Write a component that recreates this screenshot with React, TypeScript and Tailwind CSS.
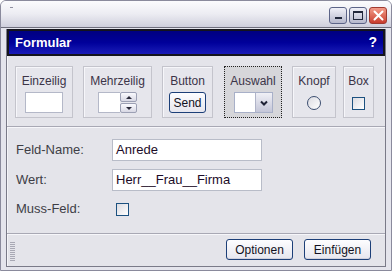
import React from "react";

const F = { fontFamily: '"Liberation Sans", Arial, sans-serif' };

function XPButton({ label, w }: { label: string; w: string }) {
  return (
    <div
      className={`${w} h-[21px] flex items-center justify-center rounded-[3px] border border-[#1c3f78] bg-gradient-to-b from-[#fdfdff] to-[#e6e6ee] text-[12px] text-[#111122] shadow-[inset_0_-1px_0_#d0d0dc]`}
    >
      {label}
    </div>
  );
}

function ToolBox({
  label,
  w,
  children,
  active,
}: {
  label: string;
  w: string;
  children: React.ReactNode;
  active?: boolean;
}) {
  return (
    <div
      className={`${w} h-[52px] flex flex-col items-center pt-[7px] ${
        active
          ? "border border-dotted border-[#222] bg-[#d6d6da]"
          : "border border-[#c4c4cc] bg-[#e6e6ec] shadow-[inset_1px_1px_0_#f6f6fa]"
      }`}
    >
      <div className="text-[12px] leading-[14px] text-[#3b3448] h-[18px]">{label}</div>
      <div className="flex-1 flex items-start justify-center">{children}</div>
    </div>
  );
}

export default function App() {
  return (
    <div style={F} className="w-[392px] h-[271px] overflow-hidden bg-white">
      <div className="w-[392px] h-[271px] flex flex-col rounded-t-[6px] border border-[#8a8a9c] bg-[#e4e4ec]">
        {/* title bar */}
        <div className="h-[27px] flex items-start relative bg-gradient-to-b from-[#fbfbfd] via-[#ececf2] to-[#cfcfdc] rounded-t-[5px] border-b border-[#6e6e7c]">
          <div className="absolute left-[9px] top-[6px] w-[3px] h-[1px] bg-[#9090a0]" />
          <div className="ml-auto mr-[4px] mt-[6px] flex gap-[2px]">
            <div className="w-[18px] h-[17px] rounded-[3px] border border-[#5c6488] bg-gradient-to-b from-[#f0f0f8] to-[#b6b8cc] flex items-end justify-center pb-[4px]">
              <div className="w-[7px] h-[2px] bg-[#22283c]" />
            </div>
            <div className="w-[18px] h-[17px] rounded-[3px] border border-[#5c6488] bg-gradient-to-b from-[#f0f0f8] to-[#b6b8cc] flex items-center justify-center">
              <div className="w-[10px] h-[9px] border border-[#22283c] border-t-2" />
            </div>
            <div className="w-[18px] h-[17px] rounded-[3px] border border-[#a03a30] bg-gradient-to-b from-[#f29a88] to-[#c83a2c] flex items-center justify-center">
              <svg width="11" height="11" viewBox="0 0 11 11">
                <path d="M1.5 1.5 L9.5 9.5 M9.5 1.5 L1.5 9.5" stroke="#fff" strokeWidth="2" strokeLinecap="round" />
              </svg>
            </div>
          </div>
        </div>

        {/* body */}
        <div className="flex-1 px-[5px] pb-[3px] pt-[1px] flex">
          <div className="flex-1 flex flex-col border border-[#7a7a88] border-t-0 bg-[#e4e4ea] shadow-[inset_1px_0_0_#f4f4f8]">
            {/* header */}
            <div className="h-[27px] flex items-center px-[6px] border-2 border-[#14141c] bg-gradient-to-b from-[#000080] via-[#00009a] to-[#1a1ab8]">
              <span className="text-[13px] font-bold text-white">Formular</span>
              <span className="ml-auto text-[14px] font-bold text-white">?</span>
            </div>

            {/* toolbar */}
            <div className="h-[71px] flex items-start pl-[8px] pt-[10px] border-b border-[#a8a8b4]">
              <ToolBox label="Einzeilig" w="w-[58px]">
                <div className="w-[38px] h-[21px] bg-white border border-[#b4b8c8]" />
              </ToolBox>
              <div className="w-[10px]" />
              <ToolBox label="Mehrzeilig" w="w-[69px]">
                <div className="flex">
                  <div className="w-[22px] h-[21px] bg-white border border-[#b4b8c8] border-r-0" />
                  <div className="w-[17px] h-[21px] flex flex-col gap-[1px]">
                    <div className="flex-1 rounded-[2px] border border-[#9ca0b4] bg-gradient-to-b from-[#fafafe] to-[#d8d8e4] flex items-center justify-center">
                      <div className="w-0 h-0 border-l-[3px] border-r-[3px] border-b-[3px] border-l-transparent border-r-transparent border-b-[#2a2a3a]" />
                    </div>
                    <div className="flex-1 rounded-[2px] border border-[#9ca0b4] bg-gradient-to-b from-[#fafafe] to-[#d8d8e4] flex items-center justify-center">
                      <div className="w-0 h-0 border-l-[3px] border-r-[3px] border-t-[3px] border-l-transparent border-r-transparent border-t-[#2a2a3a]" />
                    </div>
                  </div>
                </div>
              </ToolBox>
              <div className="w-[10px]" />
              <ToolBox label="Button" w="w-[51px]">
                <div className="w-[37px] h-[21px] flex items-center justify-center rounded-[3px] border border-[#1c3f78] bg-gradient-to-b from-[#fdfdff] to-[#e6e6ee] text-[12px] text-[#111122]">
                  Send
                </div>
              </ToolBox>
              <div className="w-[11px]" />
              <ToolBox label="Auswahl" w="w-[58px]" active>
                <div className="flex border border-[#a8b0c8] bg-white">
                  <div className="w-[20px] h-[19px] bg-white" />
                  <div className="w-[17px] h-[19px] bg-gradient-to-b from-[#f0f0f6] to-[#c4c6d8] border-l border-[#b0b4c8] flex items-center justify-center">
                    <svg width="8" height="6" viewBox="0 0 8 6">
                      <path d="M1 1.5 L4 4.5 L7 1.5" stroke="#1e2236" strokeWidth="2" fill="none" />
                    </svg>
                  </div>
                </div>
              </ToolBox>
              <div className="w-[10px]" />
              <ToolBox label="Knopf" w="w-[44px]">
                <div className="mt-[4px] w-[14px] h-[14px] rounded-full border border-[#3c4e70] bg-gradient-to-br from-[#dcdce2] to-[#ffffff]" />
              </ToolBox>
              <div className="w-[7px]" />
              <ToolBox label="Box" w="w-[31px]">
                <div className="mt-[5px] w-[13px] h-[13px] border border-[#1c5180] bg-gradient-to-br from-[#dcdce2] to-[#ffffff]" />
              </ToolBox>
            </div>

            {/* form */}
            <div className="flex-1 flex flex-col pl-[9px] pt-[11px] border-t border-[#f6f6fa] border-b border-b-[#a8a8b4]">
              <div className="flex items-center h-[22px]">
                <div className="w-[96px] text-[13px] text-[#3e3e46]">Feld-Name:</div>
                <div className="w-[150px] h-[22px] bg-white border border-[#b8bcc8] flex items-center px-[3px] text-[13px] text-[#1c0c28]">
                  Anrede
                </div>
              </div>
              <div className="flex items-center h-[22px] mt-[8px]">
                <div className="w-[96px] text-[13px] text-[#3e3e46]">Wert:</div>
                <div className="w-[150px] h-[22px] bg-white border border-[#b8bcc8] flex items-center px-[3px] text-[13px] text-[#1c0c28]">
                  Herr__Frau__Firma
                </div>
              </div>
              <div className="flex items-center h-[20px] mt-[8px]">
                <div className="w-[100px] text-[13px] text-[#3e3e46]">Muss-Feld:</div>
                <div className="w-[13px] h-[13px] border border-[#1c5180] bg-gradient-to-br from-[#dcdce2] to-[#ffffff]" />
              </div>
            </div>

            {/* footer */}
            <div className="h-[32px] flex items-start pt-[4px] pl-[3px] pr-[14px] border-t border-[#f6f6fa]">
              <div className="w-[5px] h-[19px] flex flex-col justify-between mt-[3px]">
                {Array.from({ length: 10 }).map((_, i) => (
                  <div key={i} className="h-[1px] bg-[#a8a8b4]" />
                ))}
              </div>
              <div className="ml-auto flex gap-[11px]">
                <XPButton label="Optionen" w="w-[67px]" />
                <XPButton label="Einfügen" w="w-[67px]" />
              </div>
            </div>
          </div>
        </div>
      </div>
    </div>
  );
}
